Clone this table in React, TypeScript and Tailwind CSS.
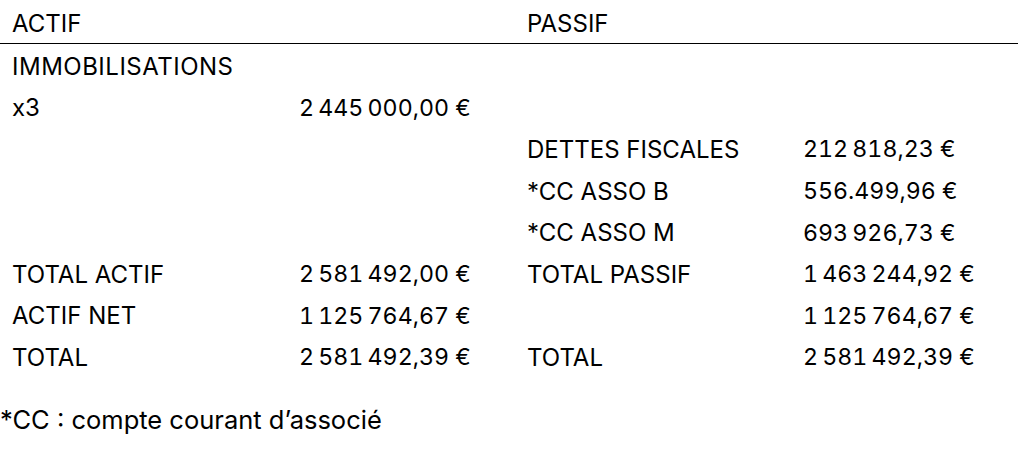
import React from 'react';

const rows: [string, string, string, string][] = [
  ['IMMOBILISATIONS', '', '', ''],
  ['x3', '2\u202F445\u202F000,00 €', '', ''],
  ['', '', 'DETTES FISCALES', '212\u202F818,23 €'],
  ['', '', '*CC ASSO B', '556.499,96 €'],
  ['', '', '*CC ASSO M', '693\u202F926,73 €'],
  ['TOTAL ACTIF', '2\u202F581\u202F492,00 €', 'TOTAL PASSIF', '1\u202F463\u202F244,92 €'],
  ['ACTIF NET', '1\u202F125\u202F764,67 €', '', '1\u202F125\u202F764,67 €'],
  ['TOTAL', '2\u202F581\u202F492,39 €', 'TOTAL', '2\u202F581\u202F492,39 €'],
];

const Row = ({ cells, className }: { cells: string[]; className?: string }) => (
  <div className={`grid grid-cols-[287px_228px_276px_1fr] items-center pl-3 ${className ?? ''}`}>
    {cells.map((c, i) => (
      <div
        key={i}
        className={`whitespace-nowrap ${i % 2 === 1 ? 'tabular-nums text-[23.2px]' : ''} ${c === 'IMMOBILISATIONS' ? 'tracking-[0.5px]' : ''}`}
      >
        {c}
      </div>
    ))}
  </div>
);

const App = () => {
  return (
    <div className="w-[1021px] h-[454px] bg-white text-black text-[24px] leading-none font-['Inter',sans-serif] overflow-hidden">
      <div className="w-[1018px]">
        <Row cells={['ACTIF', '', 'PASSIF', '']} className="h-[44px] pt-[4px] border-b border-black" />
        <div className="pt-[2px]">
          {rows.map((r, i) => (
            <Row key={i} cells={r} className="h-[41.6px]" />
          ))}
        </div>
      </div>
      <p className="mt-[28px] text-[25.5px]">*CC : compte courant d’associé</p>
    </div>
  );
};

export default App;
